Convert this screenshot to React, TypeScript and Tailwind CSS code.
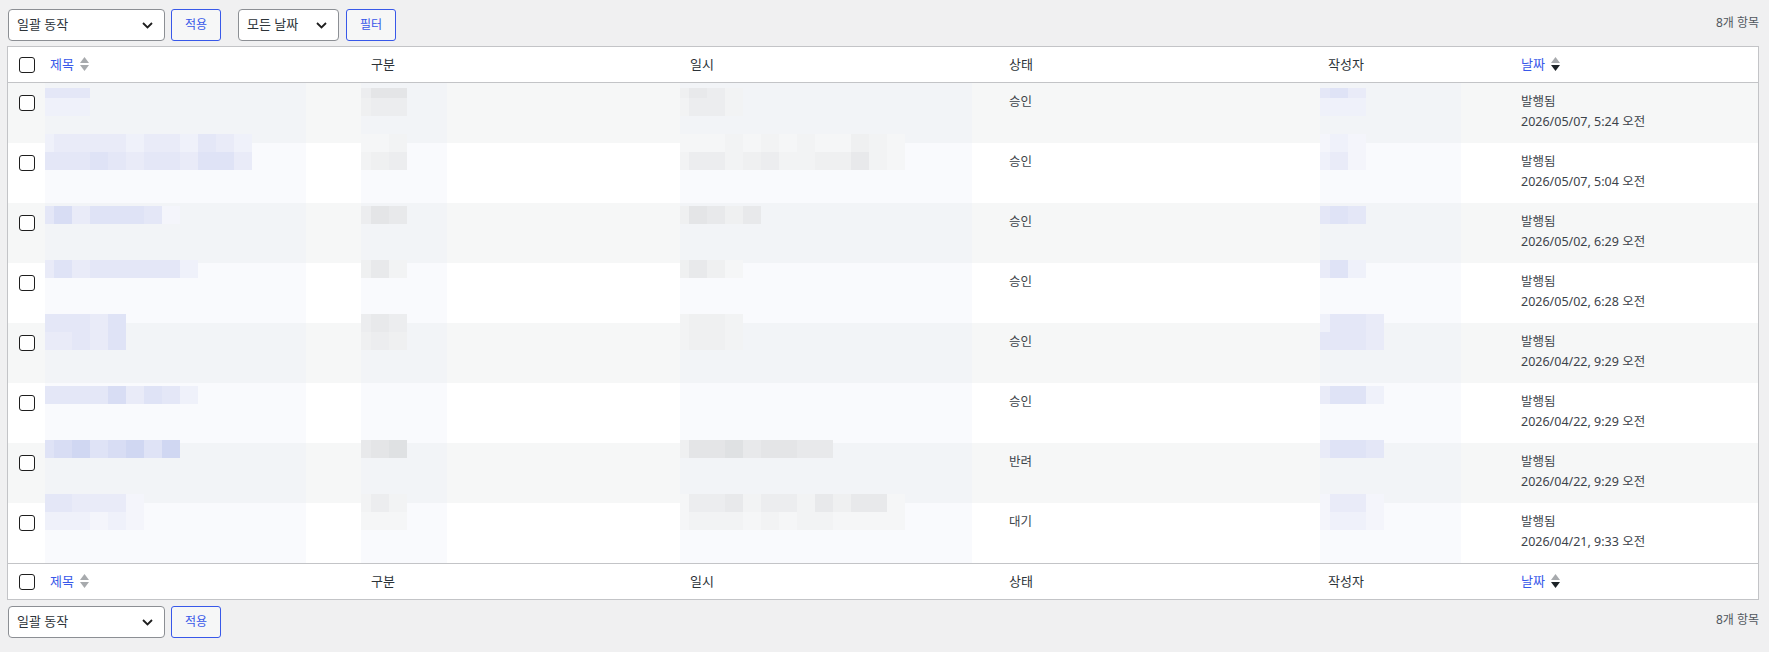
import React from 'react';

const BLUE = ['bg-[#d0d7f2]', 'bg-[#d8ddf4]', 'bg-[#dfe3f6]', 'bg-[#e4e7f7]', 'bg-[#e9ebf8]', 'bg-[#eff1fa]', 'bg-[#f4f5fb]'];
const GRAY = ['bg-[#dfe1e3]', 'bg-[#e4e5e7]', 'bg-[#e8e9eb]', 'bg-[#ecedef]', 'bg-[#eff0f1]', 'bg-[#f2f3f4]', 'bg-[#f5f6f7]'];

interface Row {
  striped: boolean;
  status: string;
  date: string;
  shift: string;
  short?: boolean;
  title: string[];
  cat: string[];
  when: string[];
  author: string[];
}

// redacted cells are drawn as pixel mosaics, one digit per block
const rows: Row[] = [
  { striped: true, status: '승인', date: '2026/05/07, 5:24 오전', shift: 'mt-[5px]', short: true, title: ['333', '555'], cat: ['311', '433'], when: ['4235', '5335'], author: ['324', '555'] },
  { striped: false, status: '승인', date: '2026/05/07, 5:04 오전', shift: '-mt-[9px]', title: ['544445445345', '333234334224'], cat: ['665', '543'], when: ['6665656566456', '5335435544256'], author: ['656', '546'] },
  { striped: true, status: '승인', date: '2026/05/02, 6:29 오전', shift: 'mt-[3px]', title: ['31422236'], cat: ['312'], when: ['41242'], author: ['323'] },
  { striped: false, status: '승인', date: '2026/05/02, 6:28 오전', shift: '-mt-[3px]', title: ['424333335'], cat: ['425'], when: ['4246'], author: ['425'] },
  { striped: true, status: '승인', date: '2026/04/22, 9:29 오전', shift: '-mt-[9px]', title: ['33342', '44342'], cat: ['323', '434'], when: ['5445', '5445'], author: ['5334', '3334'] },
  { striped: false, status: '승인', date: '2026/04/22, 9:29 오전', shift: 'mt-[3px]', title: ['333314235'], cat: [], when: [], author: ['4225'] },
  { striped: true, status: '반려', date: '2026/04/22, 9:29 오전', shift: '-mt-[3px]', title: ['21021020'], cat: ['210'], when: ['411021122'], author: ['4223'] },
  { striped: false, status: '대기', date: '2026/04/21, 9:33 오전', shift: '-mt-[9px]', title: ['334446', '555656'], cat: ['535', '666'], when: ['6332533524226', '6555656556666'], author: ['6446', '6556'] },
];

const GRID = 'grid grid-cols-[32px_321px_319px_319px_319px_193px_1fr]';

const Checkbox = () => (
  <input type="checkbox" className="block size-4 appearance-none rounded-[3px] border border-[#1e1e1e] bg-white" />
);

const Chevron = () => (
  <svg width="11" height="7" viewBox="0 0 11 7" fill="none">
    <path d="M1 1l4.5 4.5L10 1" stroke="#1e1e1e" strokeWidth="1.8" />
  </svg>
);

const SortArrows = ({ active }: { active?: boolean }) => (
  <svg width="9" height="15" viewBox="0 0 9 15" className="ml-[6px]">
    <path d="M4.5 0L9 6H0z" fill="#a7aaad" />
    <path d="M0 8h9l-4.5 6z" fill={active ? '#1d2327' : '#a7aaad'} />
  </svg>
);

const Select = ({ label, width }: { label: string; width: string }) => (
  <div className={`flex h-8 items-center justify-between rounded-[4px] border border-[#8c8f94] bg-white pl-[8px] pr-[11px] text-[13px] text-[#2c3338] ${width}`}>
    <span>{label}</span>
    <Chevron />
  </div>
);

const Button = ({ label }: { label: string }) => (
  <button className="flex h-8 w-[50px] items-center justify-center rounded-[3px] border border-[#3858e9] bg-[#f6f7f7] text-[12px] text-[#3858e9]">
    {label}
  </button>
);

const Mosaic = ({ lines, tone, first, wide, shift, short }: { lines: string[]; tone: string[]; first: string; wide: string; shift: string; short?: boolean }) => (
  <div className={`flex h-full flex-col bg-[#e9edf8]/25 ${wide}`}>
    {lines.length > 0 && (
      <div className={shift}>
        {lines.map((line, i) => (
          <div key={i} className={`flex ${short && i === 0 ? 'h-[10px]' : 'h-[18px]'}`}>
            {line.split('').map((d, j) => (
              <div key={j} className={`h-full ${j === 0 ? first : 'w-[18px]'} ${tone[Number(d)]}`} />
            ))}
          </div>
        ))}
      </div>
    )}
  </div>
);

const HeadRow = ({ border }: { border: string }) => (
  <div className={`${GRID} h-[36px] items-center bg-white text-[13px] text-[#2c3338] ${border}`}>
    <div className="pl-[11px]">
      <Checkbox />
    </div>
    <div className="flex items-center px-[10px] text-[#3858e9]">
      제목
      <SortArrows />
    </div>
    <div className="px-[10px]">구분</div>
    <div className="px-[10px]">일시</div>
    <div className="px-[10px]">상태</div>
    <div className="px-[10px]">작성자</div>
    <div className="flex items-center px-[10px] text-[#3858e9]">
      날짜
      <SortArrows active />
    </div>
  </div>
);

const TableNav = () => (
  <div className="flex h-8 items-center justify-between">
    <div className="flex items-center">
      <Select label="일괄 동작" width="w-[157px]" />
      <div className="ml-[6px]">
        <Button label="적용" />
      </div>
    </div>
    <span className="-mt-[4px] text-[12px] text-[#50575e]">8개 항목</span>
  </div>
);

export default function App() {
  return (
    <div className="min-h-[652px] bg-[#f0f0f1] pl-[7px] pr-[10px] pt-[9px] font-['Noto_Sans','Noto_Sans_CJK_KR',sans-serif]">
      <div className="flex h-8 items-center justify-between pl-[1px]">
        <div className="flex items-center">
          <Select label="일괄 동작" width="w-[157px]" />
          <div className="ml-[6px]">
            <Button label="적용" />
          </div>
          <div className="ml-[17px]">
            <Select label="모든 날짜" width="w-[101px]" />
          </div>
          <div className="ml-[7px]">
            <Button label="필터" />
          </div>
        </div>
        <span className="-mt-[4px] text-[12px] text-[#50575e]">8개 항목</span>
      </div>

      <div className="mt-[5px] border border-[#c3c4c7] bg-white">
        <HeadRow border="border-b border-[#c3c4c7]" />
        {rows.map((r, i) => (
          <div key={i} className={`${GRID} h-[60px] text-[12.5px] leading-[19.5px] text-[#3c434a] ${r.striped ? 'bg-[#f6f7f7]' : 'bg-white'}`}>
            <div className="pl-[11px] pt-[12px]">
              <Checkbox />
            </div>
            <div className="pl-[5px]">
              <Mosaic lines={r.title} tone={BLUE} first="w-[9px]" wide="w-[261px]" shift={r.shift} short={r.short} />
            </div>
            <div>
              <Mosaic lines={r.cat} tone={GRAY} first="w-[10px]" wide="w-[86px]" shift={r.shift} short={r.short} />
            </div>
            <div>
              <Mosaic lines={r.when} tone={GRAY} first="w-[9px]" wide="w-[292px]" shift={r.shift} short={r.short} />
            </div>
            <div className="px-[10px] pt-[9px]">{r.status}</div>
            <div className="pl-[2px]">
              <Mosaic lines={r.author} tone={BLUE} first="w-[10px]" wide="w-[141px]" shift={r.shift} short={r.short} />
            </div>
            <div className="px-[10px] pt-[9px]">
              <div>발행됨</div>
              <div>{r.date}</div>
            </div>
          </div>
        ))}
        <HeadRow border="border-t border-[#c3c4c7]" />
      </div>

      <div className="mt-[6px] pl-[1px]">
        <TableNav />
      </div>
    </div>
  );
}
